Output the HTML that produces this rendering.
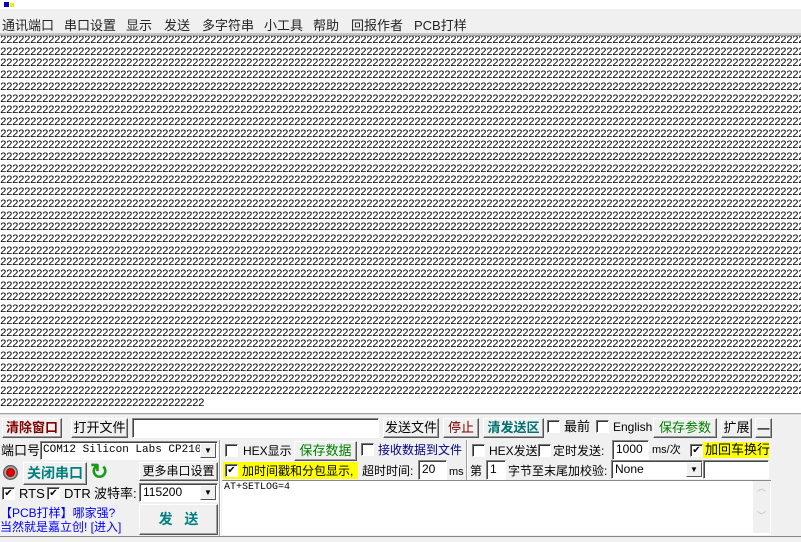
<!DOCTYPE html>
<html><head><meta charset="utf-8"><style>
*{margin:0;padding:0;box-sizing:border-box}
body{width:801px;height:542px;overflow:hidden;background:#f0f0f0;font-family:"Liberation Sans","Noto Sans CJK SC",sans-serif;font-size:12px;position:relative}
.a{position:absolute;white-space:nowrap}
.menu span{position:absolute;top:15px;font-size:13px;color:#222}
#txt{position:absolute;left:0;top:36px;width:801px;height:377px;background:#fff;overflow:hidden;font-family:"Liberation Mono",monospace;font-size:11px;letter-spacing:-0.6px;line-height:11.7px;padding-top:0px;color:#000;white-space:pre}
.btn{position:absolute;background:#f0f0f0;border:1px solid;border-color:#fff #555 #555 #fff;box-shadow:inset -1px -1px 0 #a0a0a0;text-align:center;font-size:12px;line-height:18px;white-space:nowrap;overflow:hidden}
.inp{position:absolute;background:#fff;border:1px solid;border-color:#888 #fff #fff #888;box-shadow:inset 1px 1px 0 #444;font-size:12px;padding-left:3px;line-height:17px;white-space:nowrap;overflow:hidden}
.cb{position:absolute;width:13px;height:13px;background:#fff;border:1px solid;border-color:#777 #fff #fff #777;box-shadow:inset 1px 1px 0 #333;font-size:10px;line-height:11px;text-align:center}
.lb{position:absolute;white-space:nowrap;font-size:12px;line-height:16px}
.dd{position:absolute;width:16px;background:#f0f0f0;border:1px solid;border-color:#fff #555 #555 #fff;font-size:8px;text-align:center;line-height:13px}
</style></head><body>
<div class="a" style="left:0;top:0;width:801px;height:9px;background:#fff"></div>
<div class="a" style="left:4px;top:2px;width:5px;height:5px;background:#00c"></div>
<div class="a" style="left:10px;top:3px;width:4px;height:4px;background:#ee0"></div>
<div class="menu">
<span style="left:2px">通讯端口</span><span style="left:64px">串口设置</span><span style="left:126px">显示</span><span style="left:164px">发送</span><span style="left:202px">多字符串</span><span style="left:264px">小工具</span><span style="left:313px">帮助</span><span style="left:351px">回报作者</span><span style="left:414px">PCB打样</span>
</div>
<div class="a" style="left:0;top:33px;width:801px;height:3px;background:#c8c8c8;border-bottom:1px solid #a0a0a0"></div>
<div id="txt">22222222222222222222222222222222222222222222222222222222222222222222222222222222222222222222222222222222222222222222222222222222222222
22222222222222222222222222222222222222222222222222222222222222222222222222222222222222222222222222222222222222222222222222222222222222
22222222222222222222222222222222222222222222222222222222222222222222222222222222222222222222222222222222222222222222222222222222222222
22222222222222222222222222222222222222222222222222222222222222222222222222222222222222222222222222222222222222222222222222222222222222
22222222222222222222222222222222222222222222222222222222222222222222222222222222222222222222222222222222222222222222222222222222222222
22222222222222222222222222222222222222222222222222222222222222222222222222222222222222222222222222222222222222222222222222222222222222
22222222222222222222222222222222222222222222222222222222222222222222222222222222222222222222222222222222222222222222222222222222222222
22222222222222222222222222222222222222222222222222222222222222222222222222222222222222222222222222222222222222222222222222222222222222
22222222222222222222222222222222222222222222222222222222222222222222222222222222222222222222222222222222222222222222222222222222222222
22222222222222222222222222222222222222222222222222222222222222222222222222222222222222222222222222222222222222222222222222222222222222
22222222222222222222222222222222222222222222222222222222222222222222222222222222222222222222222222222222222222222222222222222222222222
22222222222222222222222222222222222222222222222222222222222222222222222222222222222222222222222222222222222222222222222222222222222222
22222222222222222222222222222222222222222222222222222222222222222222222222222222222222222222222222222222222222222222222222222222222222
22222222222222222222222222222222222222222222222222222222222222222222222222222222222222222222222222222222222222222222222222222222222222
22222222222222222222222222222222222222222222222222222222222222222222222222222222222222222222222222222222222222222222222222222222222222
22222222222222222222222222222222222222222222222222222222222222222222222222222222222222222222222222222222222222222222222222222222222222
22222222222222222222222222222222222222222222222222222222222222222222222222222222222222222222222222222222222222222222222222222222222222
22222222222222222222222222222222222222222222222222222222222222222222222222222222222222222222222222222222222222222222222222222222222222
22222222222222222222222222222222222222222222222222222222222222222222222222222222222222222222222222222222222222222222222222222222222222
22222222222222222222222222222222222222222222222222222222222222222222222222222222222222222222222222222222222222222222222222222222222222
22222222222222222222222222222222222222222222222222222222222222222222222222222222222222222222222222222222222222222222222222222222222222
22222222222222222222222222222222222222222222222222222222222222222222222222222222222222222222222222222222222222222222222222222222222222
22222222222222222222222222222222222222222222222222222222222222222222222222222222222222222222222222222222222222222222222222222222222222
22222222222222222222222222222222222222222222222222222222222222222222222222222222222222222222222222222222222222222222222222222222222222
22222222222222222222222222222222222222222222222222222222222222222222222222222222222222222222222222222222222222222222222222222222222222
22222222222222222222222222222222222222222222222222222222222222222222222222222222222222222222222222222222222222222222222222222222222222
22222222222222222222222222222222222222222222222222222222222222222222222222222222222222222222222222222222222222222222222222222222222222
22222222222222222222222222222222222222222222222222222222222222222222222222222222222222222222222222222222222222222222222222222222222222
22222222222222222222222222222222222222222222222222222222222222222222222222222222222222222222222222222222222222222222222222222222222222
22222222222222222222222222222222222222222222222222222222222222222222222222222222222222222222222222222222222222222222222222222222222222
22222222222222222222222222222222222222222222222222222222222222222222222222222222222222222222222222222222222222222222222222222222222222
2222222222222222222222222222222222</div>
<div class="a" style="left:0;top:413px;width:801px;height:2px;border-top:1px solid #a0a0a0;background:#e0e0e0"></div>

<!-- row 1 -->
<div class="btn" style="left:2px;top:418px;width:60px;height:20px;color:#800000;font-weight:bold;font-size:13px">清除窗口</div>
<div class="btn" style="left:71px;top:418px;width:57px;height:20px;font-size:13px">打开文件</div>
<div class="inp" style="left:132px;top:418px;width:247px;height:20px"></div>
<div class="btn" style="left:383px;top:418px;width:56px;height:20px;font-size:13px">发送文件</div>
<div class="btn" style="left:443px;top:418px;width:36px;height:20px;color:#800000;font-size:13px">停止</div>
<div class="btn" style="left:483px;top:418px;width:61px;height:20px;color:#007070;font-weight:bold;font-size:13px">清发送区</div>
<div class="cb" style="left:547px;top:420px"></div><div class="lb" style="left:564px;top:419px;font-size:13px">最前</div>
<div class="cb" style="left:596px;top:420px"></div><div class="lb" style="left:613px;top:419px">English</div>
<div class="btn" style="left:653px;top:418px;width:64px;height:20px;color:#008000;font-size:13px">保存参数</div>
<div class="btn" style="left:721px;top:418px;width:31px;height:20px;font-size:13px">扩展</div>
<div class="btn" style="left:755px;top:418px;width:17px;height:20px;font-weight:bold">—</div>

<!-- left panel -->
<div class="lb" style="left:1px;top:443px;font-size:13px">端口号</div>
<div class="inp" style="left:40px;top:441px;width:178px;height:19px;font-family:'Liberation Mono',monospace;font-size:11px;padding-left:2px">COM12 Silicon Labs CP210x</div>
<div class="dd" style="left:200px;top:443px;height:15px">▼</div>
<div class="a" style="left:3px;top:465px;width:15px;height:15px;border-radius:50%;background:radial-gradient(circle,#e00 0 3px,#800 4px,#bbb 5px,#555 7px)"></div>
<div class="btn" style="left:23px;top:462px;width:64px;height:23px;color:#008080;font-weight:bold;font-size:14px;line-height:21px">关闭串口</div>
<div class="a" style="left:90px;top:460px;font-size:22px;line-height:24px;color:#1a9a1a;font-weight:bold">↻</div>
<div class="btn" style="left:139px;top:462px;width:79px;height:19px;line-height:17px">更多串口设置</div>
<div class="cb" style="left:2px;top:487px">✔</div><div class="lb" style="left:19px;top:486px;font-size:13px">RTS</div>
<div class="cb" style="left:47px;top:487px">✔</div><div class="lb" style="left:64px;top:486px;font-size:13px">DTR</div>
<div class="lb" style="left:94px;top:486px;font-size:13px">波特率:</div>
<div class="inp" style="left:139px;top:483px;width:79px;height:19px;font-size:12px">115200</div>
<div class="dd" style="left:200px;top:485px;height:15px">▼</div>
<div class="lb" style="left:0;top:505px;color:#00f;font-size:12px">【PCB打样】哪家强?</div>
<div class="lb" style="left:0;top:519px;color:#00f;font-size:12px">当然就是嘉立创! [进入]</div>
<div class="btn" style="left:139px;top:504px;width:79px;height:31px;color:#008080;font-weight:bold;font-size:14px;line-height:29px">发&nbsp;&nbsp;&nbsp;送</div>
<div class="a" style="left:219px;top:440px;width:2px;height:96px;border-left:1px solid #a0a0a0;border-right:1px solid #fff"></div>

<!-- right panel -->
<div class="cb" style="left:225px;top:444px"></div><div class="lb" style="left:243px;top:443px;font-size:12px">HEX显示</div>
<div class="btn" style="left:294px;top:441px;width:63px;height:20px;color:#008000;font-size:13px">保存数据</div>
<div class="cb" style="left:361px;top:443px"></div><div class="lb" style="left:378px;top:442px;color:#000080">接收数据到文件</div>
<div class="a" style="left:466px;top:440px;width:2px;height:40px;border-left:1px solid #a0a0a0;border-right:1px solid #fff"></div>
<div class="cb" style="left:472px;top:444px"></div><div class="lb" style="left:489px;top:443px;font-size:12px">HEX发送</div>
<div class="cb" style="left:538px;top:444px"></div><div class="lb" style="left:553px;top:443px">定时发送:</div>
<div class="inp" style="left:612px;top:440px;width:37px;height:20px">1000</div>
<div class="lb" style="left:652px;top:442px;font-size:11px">ms/次</div>
<div class="cb" style="left:690px;top:444px">✔</div>
<div class="lb" style="left:703px;top:442px;background:#ff0;width:66px;padding-left:2px;font-size:13px">加回车换行</div>

<div class="a" style="left:223px;top:462px;width:135px;height:17px;background:#ff0"></div>
<div class="cb" style="left:225px;top:464px">✔</div><div class="lb" style="left:242px;top:463px">加时间戳和分包显示,</div>
<div class="lb" style="left:362px;top:463px">超时时间:</div>
<div class="inp" style="left:418px;top:460px;width:29px;height:20px">20</div>
<div class="lb" style="left:449px;top:464px;font-size:11px">ms</div>
<div class="lb" style="left:470px;top:463px">第</div>
<div class="inp" style="left:486px;top:460px;width:20px;height:20px">1</div>
<div class="lb" style="left:508px;top:463px">字节至末尾加校验:</div>
<div class="inp" style="left:611px;top:460px;width:92px;height:19px">None</div>
<div class="dd" style="left:686px;top:462px;height:15px">▼</div>
<div class="inp" style="left:703px;top:460px;width:66px;height:19px"></div>

<div class="inp" style="left:222px;top:480px;width:549px;height:55px;font-family:'Liberation Mono',monospace;font-size:10px;line-height:14px;padding-left:2px;border:none;box-shadow:none;border-top:1px solid #888">AT+SETLOG=4</div>
<div class="a" style="left:753px;top:481px;width:17px;height:52px;background:#f0f0f0;color:#bbb;font-size:9px;text-align:center;line-height:14px">︿<br><br>﹀</div>
<div class="a" style="left:0;top:536px;width:801px;height:6px;border-top:1px solid #888;background:#f0f0f0"></div>
</body></html>
